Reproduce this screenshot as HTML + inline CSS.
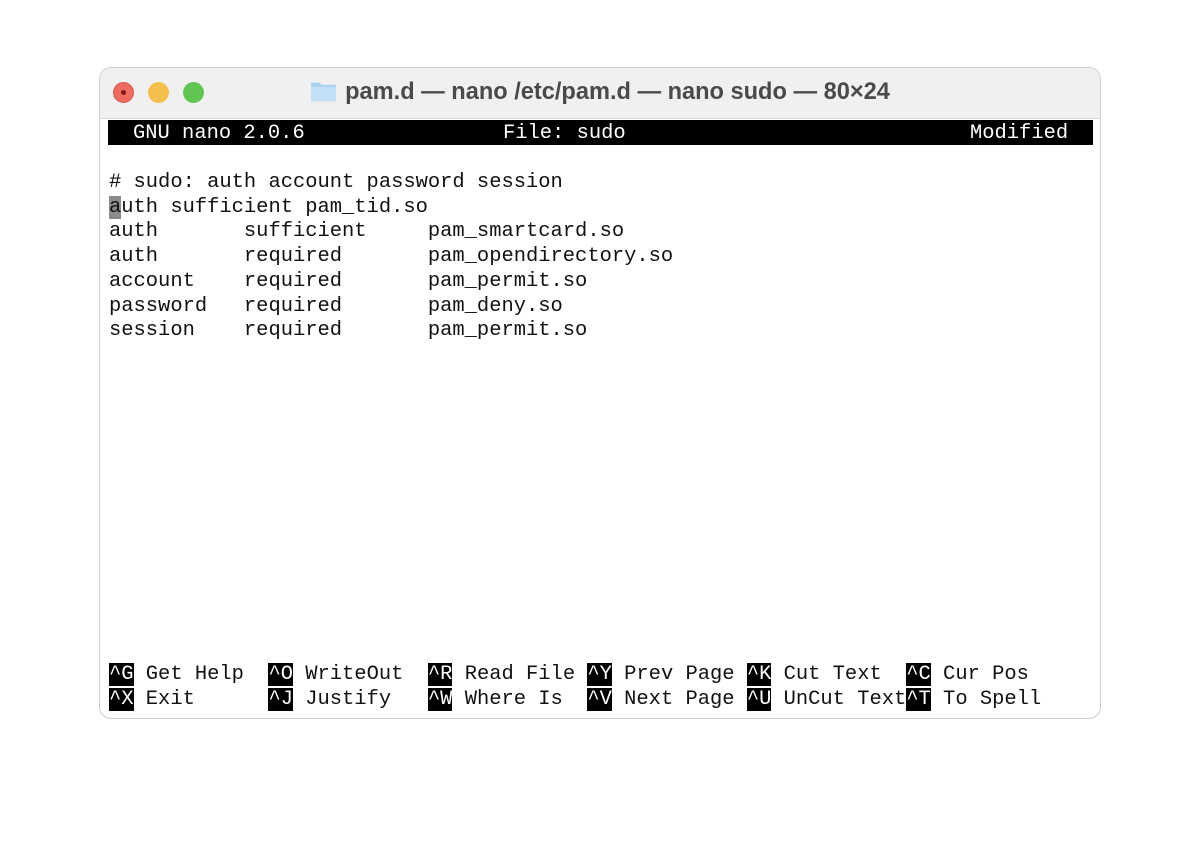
<!DOCTYPE html>
<html><head><meta charset="utf-8"><style>
body{margin:0;width:1200px;height:850px;background:#fff;position:relative;overflow:hidden}
.win{position:absolute;left:99px;top:67px;width:1002px;height:652px;border-radius:12px;border:1px solid #cfcfcf;box-sizing:border-box;background:#fff;overflow:hidden}
.tb{position:absolute;left:0;top:0;right:0;height:50px;background:#f1f0f0;border-bottom:1px solid #d9d9d9}
.dot{position:absolute;top:14px;width:21px;height:21px;border-radius:50%}
.title{position:absolute;left:0;right:0;top:11px;text-align:center;font:bold 23.6px "Liberation Sans",sans-serif;color:#4a4a4a}
.t{position:absolute;font-family:"Liberation Mono",monospace;font-size:20.45px;white-space:pre;line-height:24.7px;color:#111}
.bar{position:absolute;left:8px;top:52px;width:985px;height:25px;background:#000}
.k{background:#000;color:#fff}
</style></head><body>
<div class="win">
 <div class="tb">
  <div class="dot" style="left:13px;background:#ec6a5e;border:1px solid #d45b50;box-sizing:border-box"><div style="position:absolute;left:7px;top:7px;width:5px;height:5px;border-radius:50%;background:#7d1a12"></div></div>
  <div class="dot" style="left:48px;background:#f4bf4f"></div>
  <div class="dot" style="left:83px;background:#61c554"></div>
  <div class="title"><svg width="27" height="24" viewBox="0 0 26 22" style="vertical-align:-4px;margin-right:8px"><path d="M1 3h8l2 2h14v16H1z" fill="#a9d2f0"/><path d="M1 7h24v14H1z" fill="#c3e0f6"/></svg>pam.d — nano /etc/pam.d — nano sudo — 80×24</div>
 </div>
 <div class="bar"></div>
 <div class="t" style="left:33px;top:54px;color:#fff">GNU nano 2.0.6</div>
 <div class="t" style="left:403px;top:54px;color:#fff">File: sudo</div>
 <div class="t" style="left:870px;top:54px;color:#fff">Modified</div>
 <div class="t" style="left:9px;top:103px"># sudo: auth account password session
<span style="background:#8a8a8a">a</span>uth sufficient pam_tid.so
auth       sufficient     pam_smartcard.so
auth       required       pam_opendirectory.so
account    required       pam_permit.so
password   required       pam_deny.so
session    required       pam_permit.so</div>
 <div class="t" style="left:9px;top:595px"><span class="k">^G</span> Get Help  <span class="k">^O</span> WriteOut  <span class="k">^R</span> Read File <span class="k">^Y</span> Prev Page <span class="k">^K</span> Cut Text  <span class="k">^C</span> Cur Pos
<span class="k">^X</span> Exit      <span class="k">^J</span> Justify   <span class="k">^W</span> Where Is  <span class="k">^V</span> Next Page <span class="k">^U</span> UnCut Text<span class="k">^T</span> To Spell</div>
</div>
</body></html>
